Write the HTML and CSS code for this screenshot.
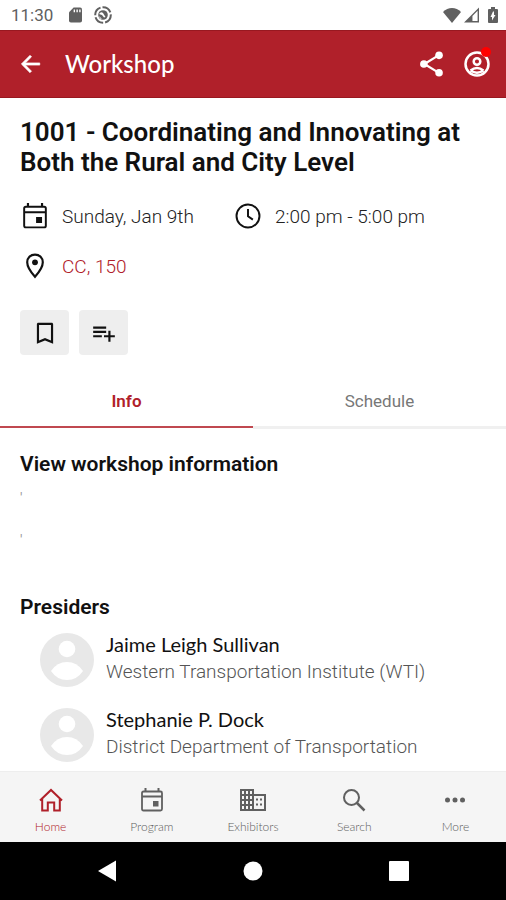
FILE: index.html
```html
<!DOCTYPE html>
<html lang="en">
<head>
<meta charset="utf-8">
<meta name="viewport" content="width=device-width, initial-scale=1">
<title>Workshop</title>
<link rel="stylesheet" href="styles.css">
</head>
<body>
<div class="status">
  <span class="clock">11:30</span>
  <svg class="sd" viewBox="0 0 14 16"><path d="M5 0h7a2 2 0 0 1 2 2v12a2 2 0 0 1-2 2H2a2 2 0 0 1-2-2V5z"/><path class="cut" d="M5 2h1.500v3H5zM8 2h1.500v3H8zM11 2h1.500v3H11z"/></svg>
  <svg class="sync" viewBox="0 0 18 18"><circle class="ring" cx="9" cy="9" r="7.800"/><circle class="disc" cx="9" cy="9" r="4.800"/><path class="cut" d="M5 8q2-3 4-1l2.500 4-1.500.5L8 9zM5 10l3 3-2-.5z"/></svg>
  <span class="signals">
    <svg class="wifi" viewBox="0 0 18 15"><path d="M9 15L0 4C5-1.300 13-1.300 18 4z"/></svg>
    <svg class="cell" viewBox="0 0 16 16"><path d="M16 0v16H0zM14.500 3.500L9 9v5.500h5.500z" fill-rule="evenodd"/></svg>
    <svg class="battery" viewBox="0 0 10 16"><path fill-rule="evenodd" d="M3 0h4v2h2q1 0 1 1v12q0 1-1 1H1q-1 0-1-1V3q0-1 1-1h2zM5 4.500L2.500 10H4v3.500L7.500 8H6V4.500z"/></svg>
  </span>
</div>
<header class="appbar">
  <button class="icon-button" aria-label="Back"><svg viewBox="0 0 24 24"><path d="M21 11H7.830l5.590-5.590L12 4l-8 8 8 8 1.410-1.410L7.830 13H21z" stroke="currentColor" stroke-width=".6"/></svg></button>
  <h1 class="bar-title">Workshop</h1>
  <button class="icon-button share" aria-label="Share"><svg viewBox="0 0 24 24"><path d="M5 12L18 4M5 12l13 8" fill="none" stroke="currentColor" stroke-width="2"/><circle cx="18.500" cy="4" r="3.500"/><circle cx="4.500" cy="12" r="3.500"/><circle cx="18.500" cy="20" r="3.500"/></svg></button>
  <button class="icon-button account" aria-label="Account"><svg viewBox="0 0 26 26" fill="none" stroke="currentColor" stroke-width="2.500"><circle cx="13" cy="13" r="11.500"/><circle cx="13" cy="10.500" r="3.300"/><path d="M6.500 19.500q6.500-5 13 0M6.500 19.500q6.500 4.500 13 0"/></svg><span class="alert"></span></button>
</header>
<main>
  <section class="summary">
    <h2 class="session">1001 - Coordinating and Innovating at Both the Rural and City Level</h2>
    <div class="facts">
      <div class="fact"><svg viewBox="0 0 24 24"><use href="#calendar"/></svg><span>Sunday, Jan 9th</span></div>
      <div class="fact"><svg viewBox="0 0 24 24" fill="none" stroke="currentColor" stroke-width="1.800"><circle cx="12" cy="12" r="10.600"/><path d="M12 5.500v6.800l4.500 3"/></svg><span>2:00 pm - 5:00 pm</span></div>
      <div class="fact"><svg viewBox="0 0 24 24"><path d="M12 1.500C7.800 1.500 4.800 4.600 4.800 8.600 4.800 14 12 22 12 22s7.200-8 7.200-13.400C19.200 4.600 16.200 1.500 12 1.500z" fill="none" stroke="currentColor" stroke-width="2"/><circle cx="12" cy="8.600" r="2.700"/></svg><a href="#room">CC, 150</a></div>
    </div>
    <div class="actions">
      <button class="chip" aria-label="Bookmark"><svg viewBox="0 0 24 24"><path d="M18 2.500H6c-1 0-1.500.6-1.500 1.500v18l7.500-3 7.500 3V4c0-.9-.5-1.500-1.500-1.500zm-.5 16.500L12 16.700 6.500 19V4.500h11z"/></svg></button>
      <button class="chip" aria-label="Add to list"><svg viewBox="0 0 24 24"><path d="M14 10H2v2h12zm0-4H2v2h12zm4 8v-4h-2v4h-4v2h4v4h2v-4h4v-2zM2 16h8v-2H2z"/></svg></button>
    </div>
  </section>
  <div class="tabs" role="tablist">
    <button class="tab active" role="tab" aria-selected="true">Info</button>
    <button class="tab" role="tab" aria-selected="false">Schedule</button>
  </div>
  <section class="details">
    <h3>View workshop information</h3>
    <p class="note">'</p>
    <p class="note">'</p>
    <h3>Presiders</h3>
    <ul class="people">
      <li><svg class="avatar" viewBox="0 0 54 54"><use href="#person"/></svg><div><p class="name">Jaime Leigh Sullivan</p><p class="org">Western Transportation Institute (WTI)</p></div></li>
      <li><svg class="avatar" viewBox="0 0 54 54"><use href="#person"/></svg><div><p class="name">Stephanie P. Dock</p><p class="org">District Department of Transportation</p></div></li>
    </ul>
  </section>
</main>
<nav class="bottom">
  <a class="current" href="#home"><svg viewBox="0 0 24 24" fill="none" stroke="currentColor" stroke-width="2"><path d="M1 12.500L12 2l11 10.500M3.200 11v11.500h5.600v-8h6.400v8h5.600V11"/></svg><span>Home</span></a>
  <a href="#program"><svg viewBox="0 0 24 24"><use href="#calendar"/></svg><span>Program</span></a>
  <a href="#exhibitors"><svg class="wide" viewBox="0 0 26 24"><path fill-rule="evenodd" d="M0 1h14v5h12v17H0zM2 3v3h2V3zM6 3v3h2V3zM10 3v3h2V3zM2 8v3h2V8zM6 8v3h2V8zM10 8v3h2V8zM2 13v3h2v-3zM6 13v3h2v-3zM10 13v3h2v-3zM2 18v3h2v-3zM6 18v3h2v-3zM10 18v3h2v-3zM14 8v13h10V8z"/><path d="M16 10.500h2v2h-2zM16 15.500h2v2h-2zM20 10.500h2v2h-2zM20 15.500h2v2h-2z"/></svg><span>Exhibitors</span></a>
  <a href="#search"><svg viewBox="0 0 24 24" fill="none" stroke="currentColor" stroke-width="2"><circle cx="9.500" cy="9.500" r="7.500"/><path d="M15 15l7.500 7.500" stroke-width="2.500"/></svg><span>Search</span></a>
  <a href="#more"><svg viewBox="0 0 24 24"><circle cx="4.500" cy="12" r="2.500"/><circle cx="12" cy="12" r="2.500"/><circle cx="19.500" cy="12" r="2.500"/></svg><span>More</span></a>
</nav>
<div class="system">
  <button aria-label="System back"><svg viewBox="0 0 24 24"><path d="M3 12L21 1.500v21z"/></svg></button>
  <button aria-label="System home"><svg viewBox="0 0 24 24"><circle cx="12" cy="12" r="9.500"/></svg></button>
  <button aria-label="Recent apps"><svg viewBox="0 0 24 24"><rect x="2" y="2" width="20" height="20" rx="1"/></svg></button>
</div>
<svg class="defs" aria-hidden="true">
  <symbol id="calendar" viewBox="0 0 24 24"><path d="M3.500 3.500h17q1.500 0 1.500 1.500v16q0 1.500-1.500 1.500h-17Q2 22.500 2 21V5q0-1.500 1.500-1.500zM2 8.500h20" fill="none" stroke="currentColor" stroke-width="1.800"/><path d="M4.500 0h2v3.500h-2zM17.500 0h2v3.500h-2zM13 13h5.500v5.500H13z"/></symbol>
  <symbol id="person" viewBox="0 0 54 54"><circle cx="27" cy="27" r="27" fill="#e8e8e8"/><circle cx="27" cy="16" r="8.300" fill="#fff"/><path d="M11 38Q17 29 27 29T43 38Q37 47 27 47T11 38z" fill="#fff"/></symbol>
</svg>
</body>
</html>
```

FILE: styles.css
```css
* { box-sizing: border-box; }

body {
  margin: 0;
  min-height: 100vh;
  display: flex;
  flex-direction: column;
  background: #fff;
  color: #111;
  font-family: Roboto, "Liberation Sans", sans-serif;
}

h1, h2, h3, p, ul { margin: 0; padding: 0; }
button { border: 0; padding: 0; background: none; color: inherit; font: inherit; }
a { color: inherit; text-decoration: none; }
svg { display: block; fill: currentColor; flex: none; }
svg[fill="none"] { fill: none; }
.defs { position: absolute; width: 0; height: 0; }

.status {
  display: flex;
  align-items: center;
  height: 30px;
  padding: 0 8px 0 11px;
  color: #606060;
}
.clock { font-size: 17px; margin-right: 16px; }
.cut { fill: #fff; }
.sd { width: 13px; height: 16px; margin-right: 12px; }
.sync { width: 18px; height: 18px; }
.ring { fill: none; stroke: currentColor; stroke-width: 2; stroke-dasharray: 10 2; }
.signals { display: flex; align-items: center; margin-left: auto; }
.wifi { width: 18px; height: 15px; margin-right: 3px; }
.cell { width: 15px; height: 16px; margin-right: 9px; }
.battery { width: 10px; height: 16px; }

.appbar {
  display: flex;
  align-items: center;
  height: 68px;
  padding: 0 16px 0 17px;
  background: #b0202a;
  border-top: 1px solid #981820;
  border-bottom: 1px solid #981820;
  color: #fff;
}
.icon-button { position: relative; }
.icon-button svg { width: 26px; height: 26px; }
.share { margin-right: 19px; }
.alert {
  position: absolute;
  top: -4px;
  right: -1px;
  width: 10px;
  height: 10px;
  border-radius: 50%;
  background: #f00;
}
.bar-title { flex: 1; margin-left: 22px; font: 500 24px/32px Lato, sans-serif; }

main { flex: 1; }
.summary { padding: 19px 20px 0; }
.session { font-size: 26px; line-height: 30px; font-weight: 600; }
.facts {
  display: grid;
  grid-template-columns: 213px 1fr;
  row-gap: 22px;
  margin-top: 25px;
}
.fact { display: flex; align-items: center; gap: 14px; height: 28px; font-size: 19px; font-weight: 300; color: #222; }
.fact svg { width: 26px; height: 26px; margin-left: 2px; color: #111; }
.fact a { color: #b0202a; }
.actions { display: flex; gap: 10px; margin-top: 30px; }
.chip {
  display: grid;
  place-items: center;
  width: 49px;
  height: 45px;
  border-radius: 4px;
  background: #eee;
}
.chip svg { width: 26px; height: 26px; }

.tabs { display: flex; align-items: flex-start; margin-top: 20px; }
.tab {
  flex: 1;
  height: 54px;
  border-bottom: 3px solid #f0f0f0;
  font-size: 17px;
  color: #777;
}
.tab.active { height: 53px; border-bottom: 2px solid #c04850; color: #b0202a; font-weight: 600; }

.details { padding: 21px 20px 0; }
.details h3 { font-size: 21px; line-height: 28px; font-weight: 600; }
.note { height: 42px; padding-top: 10px; font-size: 14px; line-height: 20px; color: #999; }
.note + h3 { margin-top: 31px; }
.people { list-style: none; padding: 12px 0 0 20px; }
.people li { display: flex; gap: 12px; margin-bottom: 21px; }
.people li:last-child { margin-bottom: 0; }
.avatar { width: 54px; height: 54px; }
.name { font: 20px/22px Lato, sans-serif; }
.org { margin-top: 5px; font-size: 19px; font-weight: 300; line-height: 24px; color: #555; }

.bottom {
  display: flex;
  height: 71px;
  background: #f5f5f5;
  border-top: 1px solid #eee;
  color: #606060;
}
.bottom a {
  flex: 1;
  display: flex;
  flex-direction: column;
  align-items: center;
  gap: 7px;
  padding-top: 16px;
  font: 300 12px/16px Lato, sans-serif;
}
.bottom svg { width: 24px; height: 24px; }
.bottom .wide { width: 26px; }
.bottom .current { color: #b0202a; }

.system {
  display: flex;
  justify-content: center;
  gap: 122px;
  height: 58px;
  background: #000;
  color: #fff;
}
.system svg { width: 24px; height: 24px; }
```
